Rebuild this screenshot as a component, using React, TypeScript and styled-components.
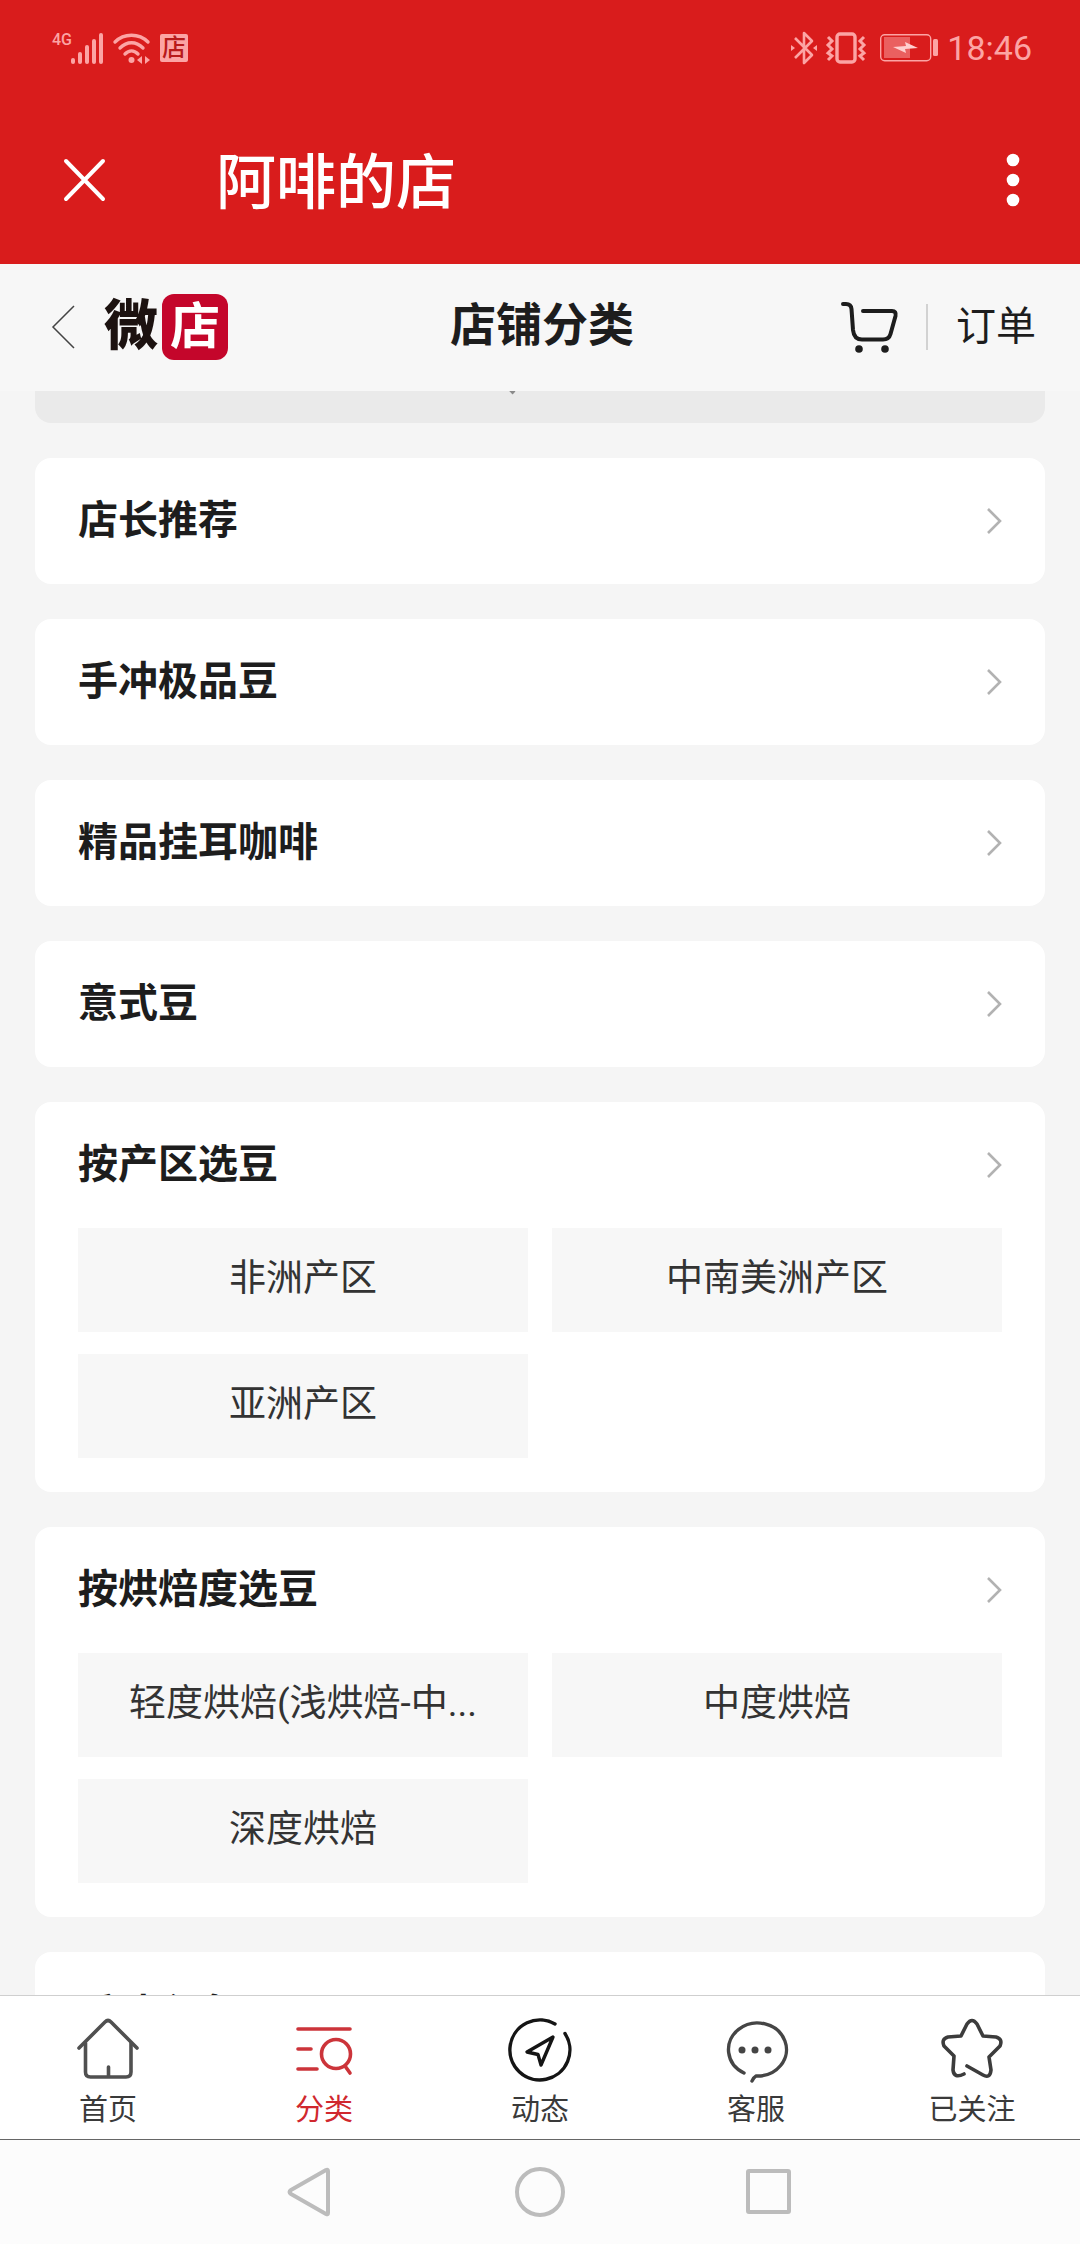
import React, { useLayoutEffect, useRef } from 'react';
import styled, { createGlobalStyle } from 'styled-components';

const GlobalStyle = createGlobalStyle`
  *, *::before, *::after { box-sizing: border-box; }
  body {
    margin: 0;
    background: #f5f5f5;
    color: #1d1d1d;
    font-family: Roboto, "Noto Sans CJK SC", sans-serif;
  }
  h1, h2 { margin: 0; font-weight: inherit; }
  button {
    margin: 0;
    padding: 0;
    border: 0;
    background: none;
    color: inherit;
    font: inherit;
    cursor: pointer;
  }
  a { color: inherit; text-decoration: none; }
  svg { display: block; flex: none; overflow: visible; }
`;

const Shell = styled.div`
  display: flex;
  flex-direction: column;
  height: 100vh;
`;

const TopArea = styled.header`
  flex: none;
  background: #d91c1c;
  color: #ffffff;
`;

const StatusBar = styled.div`
  display: flex;
  align-items: center;
  justify-content: space-between;
  height: 96px;
  padding: 0 48px 0 52px;
  color: #fca4a4;
`;

const StatusGroup = styled.div<{ $gap: number }>`
  display: flex;
  align-items: center;
  gap: ${(p) => p.$gap}px;
`;

const NetworkType = styled.span`
  align-self: flex-start;
  width: 18px;
  font-size: 16px;
  line-height: 16px;
  font-weight: 500;
  white-space: nowrap;
`;

const ShopBadge = styled.span`
  display: grid;
  place-items: center;
  width: 28px;
  height: 28px;
  border-radius: 2px;
  background: #fca4a4;
  color: #b81a1a;
  font-size: 24px;
  line-height: 28px;
  font-weight: 500;
`;

const Clock = styled.time`
  font-size: 34px;
  line-height: 40px;
`;

const TitleBar = styled.div`
  display: flex;
  align-items: center;
  height: 168px;
  padding: 0 60px;
`;

const AppTitle = styled.h1`
  flex: 1;
  padding: 8px 0 0 106px;
  font-size: 60px;
  line-height: 80px;
  font-weight: 500;
`;

const ShopHeader = styled.div`
  display: grid;
  grid-template-columns: 1fr auto 1fr;
  align-items: center;
  flex: none;
  height: 127px;
  padding: 0 44px 2px 48px;
  background: #f7f7f7;
`;

const Brand = styled.div`
  display: flex;
  align-items: center;
  gap: 28px;
`;

const LogoLink = styled.a`
  display: flex;
  align-items: center;
  gap: 4px;
  color: #1c1210;
  font-size: 54px;
  line-height: 66px;
  font-weight: 900;
`;

const LogoTile = styled.span`
  width: 66px;
  height: 66px;
  border-radius: 12px;
  background: #c4062b;
  color: #ffffff;
  text-align: center;
  font-size: 50px;
  font-weight: 700;
`;

const PageTitle = styled.h2`
  padding-bottom: 4px;
  font-size: 46px;
  line-height: 60px;
  font-weight: 700;
`;

const HeaderActions = styled.div`
  display: flex;
  align-items: center;
  justify-content: flex-end;
  gap: 28px;
`;

const Divider = styled.span`
  width: 2px;
  height: 46px;
  background: #d2d2d2;
`;

const OrdersLink = styled.a`
  font-size: 40px;
  line-height: 60px;
`;

const Scroller = styled.main`
  display: flex;
  flex-direction: column;
  gap: 35px;
  flex: 1;
  min-height: 0;
  padding: 24px 35px 35px;
  overflow-y: auto;
  scrollbar-width: none;
  background: #f5f5f5;
`;

const SearchBox = styled.label`
  display: flex;
  align-items: center;
  justify-content: center;
  gap: 12px;
  flex: none;
  height: 92px;
  border-radius: 16px;
  background: #eaeaea;
  color: #8a8a8a;
`;

const SearchInput = styled.input`
  width: 72px;
  padding: 0;
  border: 0;
  outline: 0;
  background: none;
  color: inherit;
  font: inherit;
  font-size: 28px;
  line-height: 40px;
`;

const Card = styled.section`
  flex: none;
  padding: 0 43px;
  border-radius: 16px;
  background: #ffffff;
`;

const CardHead = styled.a`
  display: flex;
  align-items: center;
  justify-content: space-between;
  height: 126px;
`;

const CardTitle = styled.h2`
  font-size: 40px;
  line-height: 60px;
  font-weight: 700;
`;

const TileGrid = styled.div`
  display: grid;
  grid-template-columns: 1fr 1fr;
  gap: 22px 24px;
  padding-bottom: 34px;
`;

const Tile = styled.a`
  height: 104px;
  background: #f7f7f7;
  color: #333333;
  text-align: center;
  white-space: nowrap;
  font-size: 37px;
  line-height: 102px;
`;

const TabBar = styled.nav`
  display: grid;
  grid-template-columns: repeat(5, 1fr);
  flex: none;
  height: 145px;
  border-top: 1px solid #cfcfcf;
  border-bottom: 1px solid #666666;
  background: #ffffff;
`;

const Tab = styled.a<{ $active?: boolean }>`
  display: flex;
  flex-direction: column;
  align-items: center;
  gap: 8px;
  padding-top: 21px;
  color: ${(p) => (p.$active ? '#d0282e' : '#3a3a3a')};
  font-size: 29px;
  line-height: 42px;
`;

const SystemNav = styled.nav`
  display: flex;
  align-items: center;
  justify-content: center;
  gap: 177px;
  flex: none;
  height: 104px;
  background: #fcfcfc;
  color: #bcbcbc;
`;

const SignalIcon = () => (
  <svg width="34" height="32" viewBox="0 0 34 32" fill="currentColor" aria-hidden="true">
    <rect x="1" y="26" width="4" height="6" rx="2" />
    <rect x="8" y="20" width="4" height="12" rx="2" />
    <rect x="15" y="13" width="4" height="19" rx="2" />
    <rect x="22" y="7" width="4" height="25" rx="2" />
    <rect x="29" y="1" width="4" height="31" rx="2" />
  </svg>
);

const WifiIcon = () => (
  <svg width="38" height="32" viewBox="0 0 38 32" fill="none" stroke="currentColor" strokeWidth="3.4" strokeLinecap="round" aria-hidden="true">
    <path d="M2 10C11 1 26 1 35 10" />
    <path d="M7 16C14 9 23 9 30 16" />
    <path d="M12 22C16 18 21 18 25 22" />
    <circle cx="18.500" cy="28" r="3" fill="currentColor" stroke="none" />
    <path d="M24 28l5-4v8zM37 28l-5-4v8z" fill="currentColor" stroke="none" />
  </svg>
);

const BluetoothIcon = () => (
  <svg width="26" height="34" viewBox="0 0 26 34" fill="none" stroke="currentColor" strokeWidth="2.6" strokeLinejoin="round" aria-hidden="true">
    <path d="M4 7l17 17-8 8V2l8 8L4 27" />
    <path d="M0 14l4 3-4 3zM26 14l-4 3 4 3z" fill="currentColor" stroke="none" />
  </svg>
);

const VibrateIcon = () => (
  <svg width="40" height="32" viewBox="0 0 40 32" fill="none" stroke="currentColor" aria-hidden="true">
    <rect x="11" y="2" width="18" height="28" rx="3" strokeWidth="3.4" />
    <path d="M2 5l4 4-4 4 4 4-4 4 4 3-4 4M38 5l-4 4 4 4-4 4 4 4-4 3 4 4" strokeWidth="3" />
  </svg>
);

const BatteryIcon = () => (
  <svg width="58" height="28" viewBox="0 0 58 28" aria-hidden="true">
    <rect x="0.700" y="0.700" width="50" height="26" rx="4" fill="none" stroke="currentColor" strokeWidth="1.400" />
    <rect x="4" y="3" width="26" height="21" fill="currentColor" opacity="0.5" />
    <path d="M13 13l13-1-1-4 13 6-13 1 1 4z" fill="#ffd0d0" />
    <rect x="53" y="5" width="5" height="17" rx="1.500" fill="currentColor" />
  </svg>
);

const CloseIcon = () => (
  <svg width="50" height="42" viewBox="0 0 50 42" fill="none" stroke="currentColor" strokeWidth="4" strokeLinecap="round" aria-hidden="true">
    <path d="M6 2l37 38M43 2L6 40" />
  </svg>
);

const MoreIcon = () => (
  <svg width="14" height="54" viewBox="0 0 14 54" fill="currentColor" aria-hidden="true">
    <circle cx="7" cy="7" r="6.300" />
    <circle cx="7" cy="27" r="6.300" />
    <circle cx="7" cy="47" r="6.300" />
  </svg>
);

const BackIcon = () => (
  <svg width="28" height="44" viewBox="0 0 28 44" fill="none" stroke="#444444" strokeWidth="1.500" aria-hidden="true">
    <path d="M26 1L5 22l21 21" />
  </svg>
);

const CartIcon = () => (
  <svg width="58" height="52" viewBox="0 0 58 52" fill="none" stroke="#1d1d1d" strokeWidth="4" strokeLinecap="round" strokeLinejoin="round" aria-hidden="true">
    <path d="M3 3h3q5 0 5.500 5L13 29Q14 38.500 22 38.500H43Q49 38.500 50.500 33L55.500 15Q56.500 10 52 10H23" />
    <circle cx="19" cy="48" r="3.800" fill="#1d1d1d" stroke="none" />
    <circle cx="45" cy="48" r="3.800" fill="#1d1d1d" stroke="none" />
  </svg>
);

const ChevronIcon = () => (
  <svg width="16" height="28" viewBox="0 0 16 28" fill="none" stroke="#b2b2b2" strokeWidth="2.600" aria-hidden="true">
    <path d="M2 2l12 12L2 26" />
  </svg>
);

const SearchIcon = () => (
  <svg width="34" height="34" viewBox="0 0 34 34" fill="none" stroke="currentColor" strokeWidth="4" aria-hidden="true">
    <circle cx="15" cy="15" r="12" />
    <path d="M24 24l9 9" />
  </svg>
);

const HomeIcon = () => (
  <svg width="64" height="64" viewBox="0 0 64 64" fill="none" stroke="#505050" strokeWidth="3.600" strokeLinecap="round" strokeLinejoin="round" aria-hidden="true">
    <path d="M3 31L29 5q3-3 6 0L61 31" />
    <path d="M9.500 26V55q0 5 5 5H50q5 0 5-5V26M32.500 50v10" />
  </svg>
);

const CategoryIcon = () => (
  <svg width="64" height="64" viewBox="0 0 64 64" fill="none" stroke="#cc343a" strokeWidth="3.600" strokeLinecap="round" aria-hidden="true">
    <path d="M6 12H58M6 32H19M6 52H25" />
    <circle cx="44" cy="37" r="14.500" />
    <path d="M53 49l5 7" />
  </svg>
);

const MomentsIcon = () => (
  <svg width="64" height="64" viewBox="0 0 64 64" fill="none" stroke="#151515" strokeWidth="3.400" strokeLinecap="round" strokeLinejoin="round" aria-hidden="true">
    <path d="M47 7A30 30 0 1 0 57 16.500" />
    <path d="M45 20L19 35l11 2.500 3 10.500z" />
  </svg>
);

const ChatIcon = () => (
  <svg width="64" height="64" viewBox="0 0 64 64" fill="none" stroke="#454545" strokeWidth="3.400" strokeLinecap="round" strokeLinejoin="round" aria-hidden="true">
    <path d="M20 56A29 26.500 0 1 1 32 59q-2 1-4 5" />
    <g fill="#454545" stroke="none">
      <circle cx="18" cy="33" r="3.500" />
      <circle cx="31" cy="33" r="3.500" />
      <circle cx="44" cy="33" r="3.500" />
    </g>
  </svg>
);

const StarIcon = () => (
  <svg width="64" height="64" viewBox="0 0 64 64" fill="none" stroke="#3c3c3c" strokeWidth="3.600" strokeLinecap="round" strokeLinejoin="round" aria-hidden="true">
    <path d="M24 57Q14 62 13 53L14 39 4 29Q1 22 8 20L21 19 27 7Q32 0 37 7L43 19 56 20Q63 22 60 29L49 40 51 53Q50 62 43 58L27 49" />
  </svg>
);

const NavBackIcon = () => (
  <svg width="52" height="52" viewBox="0 0 52 52" fill="none" stroke="currentColor" strokeWidth="4" strokeLinejoin="round" aria-hidden="true">
    <path d="M43 5V47q0 2-2 1L6 28q-3-2 0-4L41 4q2-1 2 1z" />
  </svg>
);

const NavHomeIcon = () => (
  <svg width="52" height="52" viewBox="0 0 52 52" fill="none" stroke="currentColor" strokeWidth="4" aria-hidden="true">
    <circle cx="26" cy="26" r="23" />
  </svg>
);

const NavRecentIcon = () => (
  <svg width="52" height="52" viewBox="0 0 52 52" fill="none" stroke="currentColor" strokeWidth="4" strokeLinejoin="round" aria-hidden="true">
    <rect x="5" y="5" width="41" height="41" rx="1" />
  </svg>
);

const categories: { title: string; children?: string[] }[] = [
  { title: '店长推荐' },
  { title: '手冲极品豆' },
  { title: '精品挂耳咖啡' },
  { title: '意式豆' },
  { title: '按产区选豆', children: ['非洲产区', '中南美洲产区', '亚洲产区'] },
  { title: '按烘焙度选豆', children: ['轻度烘焙(浅烘焙-中...', '中度烘焙', '深度烘焙'] },
  { title: '手冲必备' },
];

const tabs = [
  { label: '首页', Icon: HomeIcon },
  { label: '分类', Icon: CategoryIcon, active: true },
  { label: '动态', Icon: MomentsIcon },
  { label: '客服', Icon: ChatIcon },
  { label: '已关注', Icon: StarIcon },
];

const INITIAL_SCROLL = 84;

export default function App() {
  const scroller = useRef<HTMLElement>(null);

  useLayoutEffect(() => {
    if (scroller.current) scroller.current.scrollTop = INITIAL_SCROLL;
  }, []);

  return (
    <Shell>
      <GlobalStyle />
      <TopArea>
        <StatusBar>
          <StatusGroup $gap={9}>
            <StatusGroup $gap={0}>
              <NetworkType>4G</NetworkType>
              <SignalIcon />
            </StatusGroup>
            <WifiIcon />
            <ShopBadge>店</ShopBadge>
          </StatusGroup>
          <StatusGroup $gap={14}>
            <StatusGroup $gap={9}>
              <BluetoothIcon />
              <VibrateIcon />
            </StatusGroup>
            <StatusGroup $gap={9}>
              <BatteryIcon />
              <Clock>18:46</Clock>
            </StatusGroup>
          </StatusGroup>
        </StatusBar>
        <TitleBar>
          <button type="button" aria-label="关闭"><CloseIcon /></button>
          <AppTitle>阿啡的店</AppTitle>
          <button type="button" aria-label="更多"><MoreIcon /></button>
        </TitleBar>
      </TopArea>

      <ShopHeader>
        <Brand>
          <button type="button" aria-label="返回"><BackIcon /></button>
          <LogoLink href="#home">微<LogoTile>店</LogoTile></LogoLink>
        </Brand>
        <PageTitle>店铺分类</PageTitle>
        <HeaderActions>
          <button type="button" aria-label="购物车"><CartIcon /></button>
          <Divider />
          <OrdersLink href="#orders">订单</OrdersLink>
        </HeaderActions>
      </ShopHeader>

      <Scroller ref={scroller}>
        <SearchBox>
          <SearchIcon />
          <SearchInput type="search" placeholder="搜索" aria-label="搜索" />
        </SearchBox>
        {categories.map(({ title, children }) => (
          <Card key={title}>
            <CardHead href="#category">
              <CardTitle>{title}</CardTitle>
              <ChevronIcon />
            </CardHead>
            {children && (
              <TileGrid>
                {children.map((name) => (
                  <Tile key={name} href="#category">{name}</Tile>
                ))}
              </TileGrid>
            )}
          </Card>
        ))}
      </Scroller>

      <TabBar>
        {tabs.map(({ label, Icon, active }) => (
          <Tab key={label} href="#tab" $active={active}>
            <Icon />
            {label}
          </Tab>
        ))}
      </TabBar>

      <SystemNav>
        <button type="button" aria-label="后退"><NavBackIcon /></button>
        <button type="button" aria-label="主屏幕"><NavHomeIcon /></button>
        <button type="button" aria-label="最近任务"><NavRecentIcon /></button>
      </SystemNav>
    </Shell>
  );
}
